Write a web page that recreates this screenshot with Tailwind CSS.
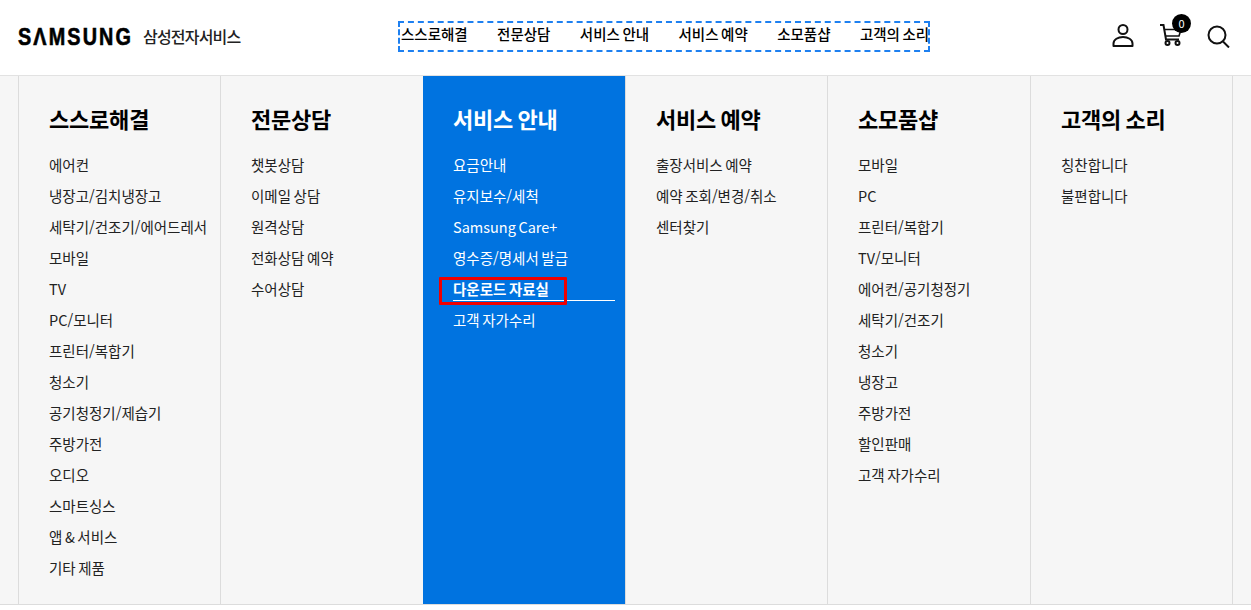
<!DOCTYPE html>
<html lang="ko">
<head>
    <meta charset="UTF-8">
    <meta name="viewport" content="width=device-width, initial-scale=1.0">
    <title>삼성전자서비스</title>
    <script src="https://cdn.jsdelivr.net/npm/@tailwindcss/browser@4"></script>
</head>
<body class="bg-white h-[610px] overflow-hidden font-['Noto_Sans_CJK_KR','Noto_Sans',sans-serif] text-[#111]">
    <!-- header -->
    <header class="h-[76px] border-b border-[#e2e2e2] flex items-center relative">
        <a class="flex items-center ml-[18px] w-[380px] -mt-[3px]">
            <span class="inline-block w-[113px] whitespace-nowrap origin-left scale-x-[0.86] translate-y-[1px] font-['Liberation_Sans',sans-serif] font-bold text-[23px] leading-none tracking-[2.5px] [-webkit-text-stroke:0.6px_black] text-black">SΛMSUNG</span>
            <span class="ml-[12px] text-[16px] font-medium tracking-[-0.8px] text-[#222]">삼성전자서비스</span>
        </a>
        <nav class="flex items-center gap-[29.4px] whitespace-nowrap h-[31px] w-[532px] pl-[1px] pb-[5px] border-2 border-dashed border-[#1e80f0] -mt-[3px] text-[14.5px] [word-spacing:-1.5px] font-medium text-black">
            <span>스스로해결</span>
            <span>전문상담</span>
            <span>서비스 안내</span>
            <span>서비스 예약</span>
            <span>소모품샵</span>
            <span>고객의 소리</span>
        </nav>
        <div class="absolute left-[1110px] top-[22px] flex items-start">
            <svg class="w-[26px] h-[26px]" viewBox="0 0 26 26" fill="none" stroke="#111" stroke-width="2">
                <circle cx="13" cy="7.5" r="4.5"/>
                <path d="M3.5 24 v-2.5 c0-4 4.5-6.5 9.5-6.5 s9.500 2.500 9.500 6.500 v2.500 z" stroke-linejoin="round"/>
            </svg>
            <div class="relative w-[32px] h-[26px] ml-[22px]">
                <svg class="w-[26px] h-[26px]" viewBox="0 0 26 26" fill="none" stroke="#111" stroke-width="2">
                    <path d="M2 3 h3.500 l2.500 14.500 h13"/>
                    <path d="M6 7.500 h17 l-2 6.500 h-14" stroke-width="1.600"/>
                    <circle cx="9.500" cy="21" r="2"/>
                    <circle cx="19.500" cy="21" r="2"/>
                </svg>
                <span class="absolute left-[14px] -top-[8px] w-[19px] h-[19px] rounded-full bg-black text-white text-[11px] flex items-center justify-center">0</span>
            </div>
            <svg class="w-[26px] h-[26px] ml-[15px]" viewBox="0 0 26 26" fill="none" stroke="#111" stroke-width="2">
                <circle cx="12" cy="13" r="8.500"/>
                <path d="M18 19.500 l6 6"/>
            </svg>
        </div>
    </header>

    <!-- mega menu -->
    <main class="h-[529px] bg-[#f6f6f6] border-b border-[#dcdcdc] pl-[18px] overflow-hidden">
        <div class="grid grid-cols-[202px_203px_202px_202px_203px_202px] w-[1215px] h-full border-r border-[#dcdcdc] text-[14.5px] [word-spacing:-1.5px] text-[#222]">
            <section class="border-l border-[#dcdcdc] pl-[30px] pt-[26px]">
                <h2 class="text-[22px] leading-[32px] font-bold text-black tracking-[-0.2px] mb-[15px]">스스로해결</h2>
                <ul class="leading-[31px]">
                    <li>에어컨</li>
                    <li>냉장고/김치냉장고</li>
                    <li class="whitespace-nowrap">세탁기/건조기/에어드레서</li>
                    <li>모바일</li>
                    <li>TV</li>
                    <li>PC/모니터</li>
                    <li>프린터/복합기</li>
                    <li>청소기</li>
                    <li>공기청정기/제습기</li>
                    <li>주방가전</li>
                    <li>오디오</li>
                    <li>스마트싱스</li>
                    <li>앱 &amp; 서비스</li>
                    <li>기타 제품</li>
                </ul>
            </section>
            <section class="border-l border-[#dcdcdc] pl-[30px] pt-[26px]">
                <h2 class="text-[22px] leading-[32px] font-bold text-black tracking-[-0.2px] mb-[15px]">전문상담</h2>
                <ul class="leading-[31px]">
                    <li>챗봇상담</li>
                    <li>이메일 상담</li>
                    <li>원격상담</li>
                    <li>전화상담 예약</li>
                    <li>수어상담</li>
                </ul>
            </section>
            <section class="bg-[#0073e0] text-white pl-[30px] pr-[10px] pt-[26px]">
                <h2 class="text-[22px] leading-[32px] font-bold tracking-[-0.2px] mb-[15px]">서비스 안내</h2>
                <ul class="leading-[31px]">
                    <li>요금안내</li>
                    <li>유지보수/세척</li>
                    <li>Samsung Care+</li>
                    <li>영수증/명세서 발급</li>
                    <li class="relative font-bold">
                        다운로드 자료실
                        <span class="absolute left-0 right-0 bottom-[3px] h-px bg-white"></span>
                        <span class="absolute -left-[14px] top-[4px] w-[128px] h-[28px] border-[3px] rounded-[1px] border-[#f00000]"></span>
                    </li>
                    <li>고객 자가수리</li>
                </ul>
            </section>
            <section class="border-l border-[#dcdcdc] pl-[30px] pt-[26px]">
                <h2 class="text-[22px] leading-[32px] font-bold text-black tracking-[-0.2px] mb-[15px]">서비스 예약</h2>
                <ul class="leading-[31px]">
                    <li>출장서비스 예약</li>
                    <li>예약 조회/변경/취소</li>
                    <li>센터찾기</li>
                </ul>
            </section>
            <section class="border-l border-[#dcdcdc] pl-[30px] pt-[26px]">
                <h2 class="text-[22px] leading-[32px] font-bold text-black tracking-[-0.2px] mb-[15px]">소모품샵</h2>
                <ul class="leading-[31px]">
                    <li>모바일</li>
                    <li>PC</li>
                    <li>프린터/복합기</li>
                    <li>TV/모니터</li>
                    <li>에어컨/공기청정기</li>
                    <li>세탁기/건조기</li>
                    <li>청소기</li>
                    <li>냉장고</li>
                    <li>주방가전</li>
                    <li>할인판매</li>
                    <li>고객 자가수리</li>
                </ul>
            </section>
            <section class="border-l border-[#dcdcdc] pl-[30px] pt-[26px]">
                <h2 class="text-[22px] leading-[32px] font-bold text-black tracking-[-0.2px] mb-[15px]">고객의 소리</h2>
                <ul class="leading-[31px]">
                    <li>칭찬합니다</li>
                    <li>불편합니다</li>
                </ul>
            </section>
        </div>
    </main>
</body>
</html>
